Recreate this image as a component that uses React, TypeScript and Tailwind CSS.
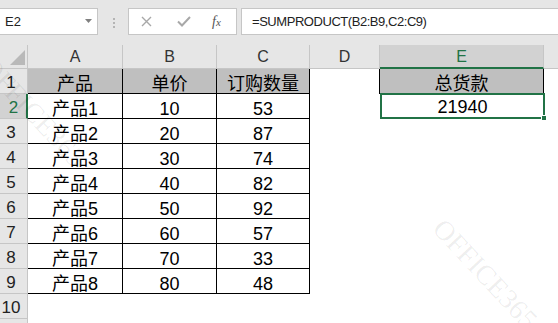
import React from "react";

const FONT = '"Liberation Sans", "Noto Sans CJK SC", Arial, sans-serif';

const products = [
  ["产品1", "10", "53"],
  ["产品2", "20", "87"],
  ["产品3", "30", "74"],
  ["产品4", "40", "82"],
  ["产品5", "50", "92"],
  ["产品6", "60", "57"],
  ["产品7", "70", "33"],
  ["产品8", "80", "48"],
];

function FormulaBar() {
  return (
    <div className="flex h-[45px] items-start bg-[#e6e6e6] pt-[8px]">
      <div className="relative -ml-px flex h-[27px] w-[99px] items-center border border-[#c6c6c6] bg-white pl-[5px] text-[13px] text-[#222]">
        E2
        <svg className="absolute left-[85px] top-[10px]" width="7" height="4" viewBox="0 0 7 4">
          <path d="M0 0 L7 0 L3.5 4 Z" fill="#808080" />
        </svg>
      </div>
      <div className="ml-[15px] mt-[10px] flex w-[2px] flex-col gap-[2px]">
        <span className="h-[2px] w-[2px] bg-[#b4b4b4]" />
        <span className="h-[2px] w-[2px] bg-[#b4b4b4]" />
        <span className="h-[2px] w-[2px] bg-[#b4b4b4]" />
      </div>
      <div className="ml-[13px] flex h-[27px] w-[109px] items-center border border-[#c6c6c6] bg-white">
        <svg className="ml-[12px]" width="11" height="11" viewBox="0 0 11 11">
          <path d="M1 1 L10 10 M10 1 L1 10" stroke="#a8a8a8" strokeWidth="1.4" />
        </svg>
        <svg className="ml-[25px]" width="14" height="11" viewBox="0 0 14 11">
          <path d="M1 5.5 L5 9.5 L13 1" stroke="#a8a8a8" strokeWidth="2" fill="none" />
        </svg>
        <span
          className="ml-[21px] text-[14px] italic text-[#555]"
          style={{ fontFamily: '"Liberation Serif", serif' }}
        >
          f<span className="text-[11px]">x</span>
        </span>
      </div>
      <div className="ml-[4px] flex h-[27px] flex-1 items-center border border-r-0 border-[#c6c6c6] bg-white pl-[10px] text-[13px] tracking-[-0.45px] text-[#222]">
        =SUMPRODUCT(B2:B9,C2:C9)
      </div>
    </div>
  );
}

function ColumnHeaders() {
  const cell =
    "flex items-end justify-center border-b border-r border-[#c6c6c6] text-[16px] leading-none text-[#333] pb-[3px]";
  return (
    <div className="flex h-[24px] bg-[#e6e6e6]">
      <div className="relative w-[28px] border-b border-r border-[#c6c6c6]">
        <svg className="absolute left-[10px] top-[5px]" width="15" height="15" viewBox="0 0 15 15">
          <path d="M15 0 L15 15 L0 15 Z" fill="#b9b9b9" />
        </svg>
      </div>
      <div className={`${cell} w-[95px]`}>A</div>
      <div className={`${cell} w-[94px]`}>B</div>
      <div className={`${cell} w-[93px]`}>C</div>
      <div className={`${cell} w-[70px]`}>D</div>
      <div className="flex w-[164px] items-end justify-center border-b-2 border-r border-b-[#217346] border-r-[#c6c6c6] bg-[#d2d2d2] pb-[2px] text-[16px] leading-none text-[#217346]">
        E
      </div>
      <div className="flex-1 border-b border-[#c6c6c6]" />
    </div>
  );
}

function RowHeader({ n, active }: { n: number; active?: boolean }) {
  return (
    <div
      className={
        active
          ? "flex w-[28px] items-end justify-center border-b border-r-2 border-b-[#c6c6c6] border-r-[#217346] bg-[#d2d2d2] pb-[2px] pl-px text-[17px] leading-none text-[#217346]"
          : "flex w-[28px] items-end justify-center border-b border-r border-[#c6c6c6] bg-[#e6e6e6] pb-[2px] pr-[5px] text-[17px] leading-none text-[#222]"
      }
    >
      {n}
    </div>
  );
}

const tableCell =
  "flex items-end justify-center border-b border-r border-black text-[18px] leading-none text-black";

function Sheet() {
  return (
    <div>
      <ColumnHeaders />
      {/* header row of the data table */}
      <div className="flex h-[25px]">
        <RowHeader n={1} />
        <div className={`${tableCell} w-[95px] bg-[#bfbfbf]`}>产品</div>
        <div className={`${tableCell} w-[94px] bg-[#bfbfbf]`}>单价</div>
        <div className={`${tableCell} w-[93px] bg-[#bfbfbf]`}>订购数量</div>
        <div className="w-[70px] border-r border-black bg-white" />
        <div className={`${tableCell} w-[164px] bg-[#bfbfbf]`}>总货款</div>
        <div className="flex-1 bg-white" />
      </div>
      {products.map((p, i) => (
        <div key={p[0]} className="flex h-[25px]">
          <RowHeader n={i + 2} active={i === 0} />
          <div className={`${tableCell} w-[95px] bg-white`}>{p[0]}</div>
          <div className={`${tableCell} w-[94px] bg-white`}>{p[1]}</div>
          <div className={`${tableCell} w-[93px] bg-white`}>{p[2]}</div>
          <div className="w-[70px] bg-white" />
          {i === 0 ? (
            <div className="relative -mt-px flex h-[26px] w-[165px] items-end justify-center border-2 border-[#217346] bg-white pb-px text-[18px] leading-none text-black">
              21940
              <span className="absolute -bottom-[4px] -right-[4px] h-[6px] w-[6px] border border-white bg-[#217346]" />
            </div>
          ) : (
            <div className="w-[164px] bg-white" />
          )}
          <div className="flex-1 bg-white" />
        </div>
      ))}
      <div className="flex h-[25px]">
        <RowHeader n={10} />
        <div className="flex-1 bg-white" />
      </div>
      <div className="flex h-[10px]">
        <div className="w-[28px] border-r border-[#c6c6c6] bg-[#e6e6e6]" />
        <div className="flex-1 bg-white" />
      </div>
    </div>
  );
}

function Watermark({ left, top }: { left: number; top: number }) {
  return (
    <div
      className="pointer-events-none absolute origin-top-left rotate-[47deg] whitespace-nowrap text-[28px] leading-none text-black/[0.07]"
      style={{ left, top, fontFamily: '"Liberation Serif", serif' }}
    >
      OFFICE365
    </div>
  );
}

export default function App() {
  return (
    <div
      className="relative h-[323px] w-[558px] overflow-hidden bg-white"
      style={{ fontFamily: FONT }}
    >
      <FormulaBar />
      <Sheet />
      <Watermark left={-4} top={52} />
      <Watermark left={448} top={214} />
      <Watermark left={160} top={-150} />
    </div>
  );
}
